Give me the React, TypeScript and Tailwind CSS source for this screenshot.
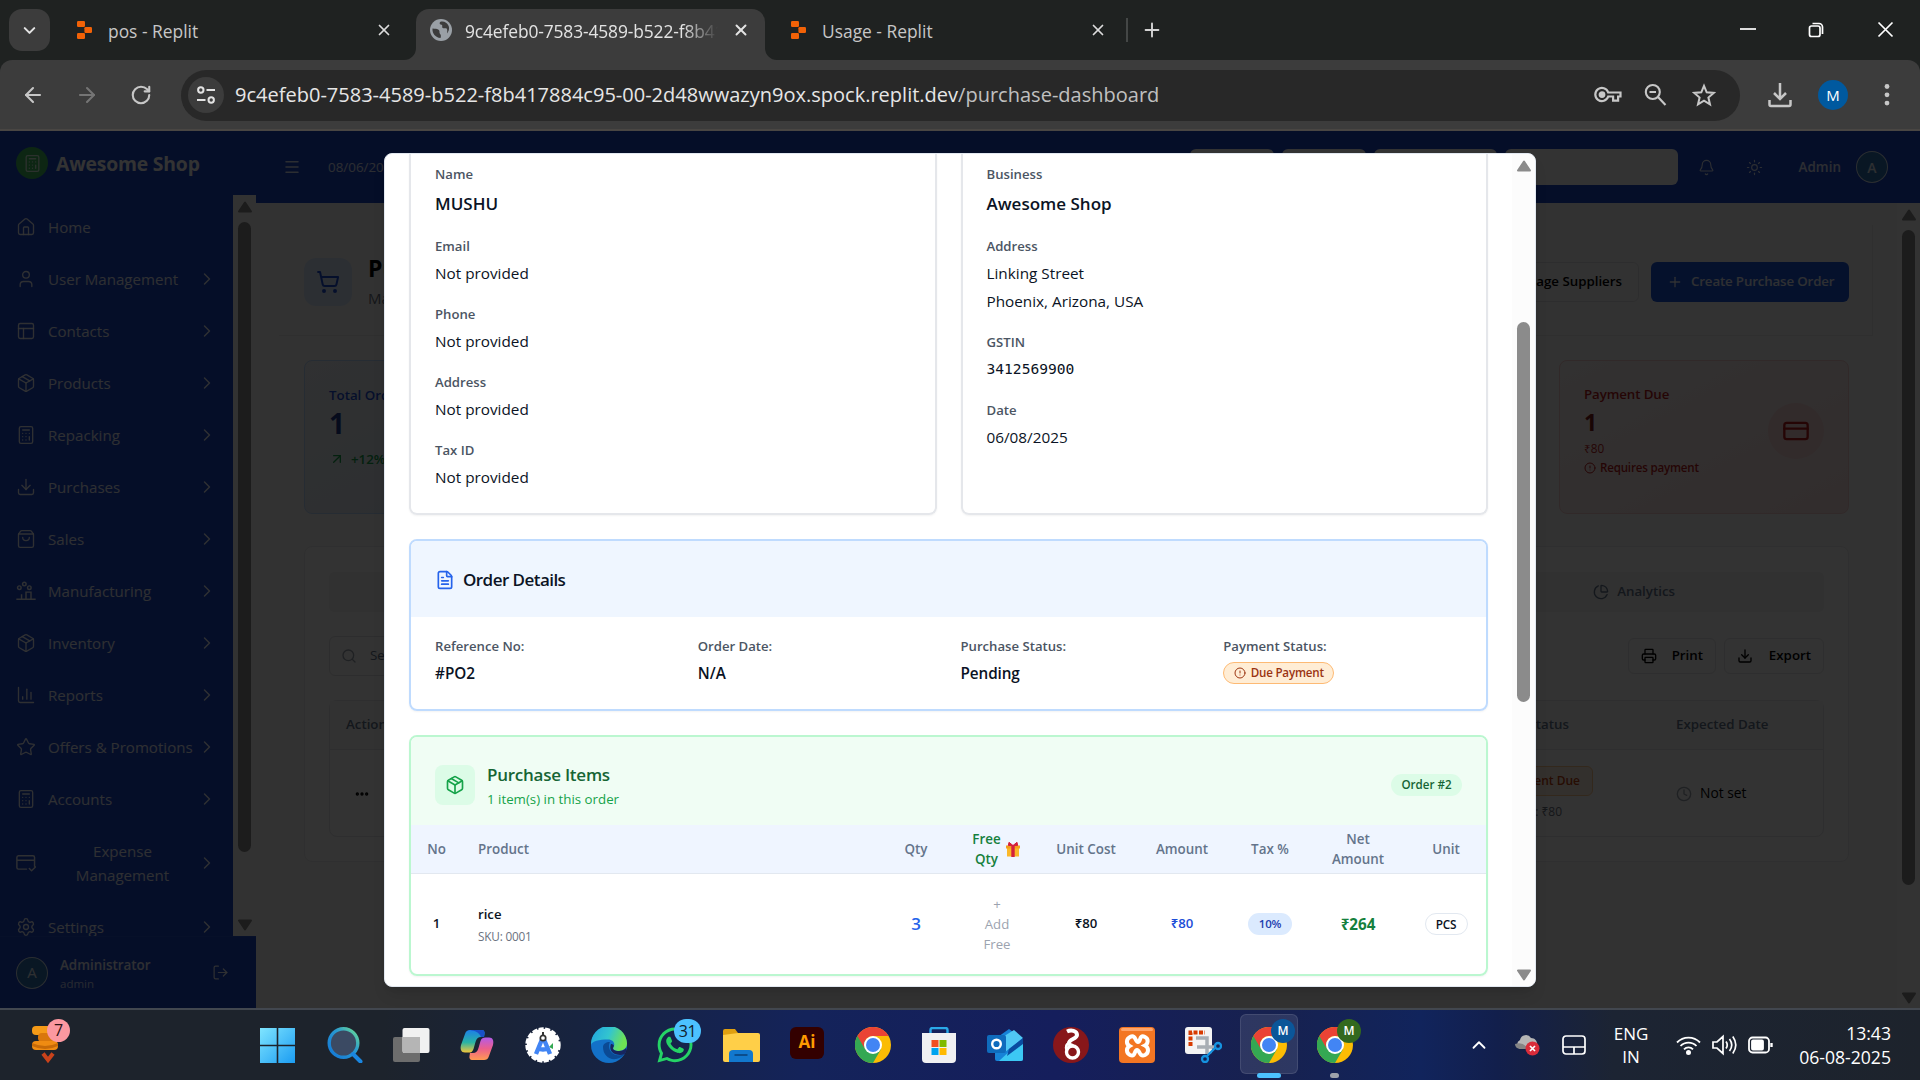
import React from 'react';
import {
  ArrowLeft, ArrowRight, ArrowUpRight, Bell, Calculator, ChevronRight, ChevronUp, CircleAlert, Clock,
  CreditCard, Download, FileText, House, LogOut, Menu, Package, PanelsTopLeft, Plus, Printer, RotateCw, Search,
  Settings, ShoppingBag, ShoppingCart, Star, Sun, User, X, ChevronDown, ChartColumn, ChartPie, Ellipsis,
} from 'lucide-react';
import { FaWhatsapp } from 'react-icons/fa';

/* ---------- Browser chrome ---------- */

function ReplitMark() {
  return (
    <svg width="15" height="18" viewBox="0 0 15 18" fill="#f26207" className="shrink-0">
      <rect x="0" y="0" width="8" height="6" rx="1.2" />
      <rect x="7.4" y="6" width="7.6" height="6" rx="1.2" />
      <rect x="0" y="12" width="8" height="6" rx="1.2" />
    </svg>
  );
}

function GlobeMark() {
  return (
    <svg width="22" height="22" viewBox="0 0 22 22" className="shrink-0">
      <circle cx="11" cy="11" r="11" fill="#9aa0a6" />
      <path d="M2.5 9.5c2.5.2 5 .2 6.4 1.5 1.2 1.3 0 2.6 1.2 3.9 1 1 1 2.4.4 4.1C5.5 18.5 2 14.6 2.5 9.5z" fill="#3c3c3c" />
      <path d="M10 3c-1 1.8.2 2.4 1.5 2.7 1.6.4 0 2.3 1.3 3.3 1.5 1 2.8-.6 4 .8.9 1.2.2 3 .3 4.6 3-3.6 2.6-8.3-1.1-10.7C14.2 2.5 12 2.3 10 3z" fill="#3c3c3c" />
    </svg>
  );
}

function TabStrip() {
  return (
    <div className="h-[60px] shrink-0 bg-[#1f2221] flex items-start text-[#e3e3e3]">
      <div className="mt-[9px] ml-[9px] w-[41px] h-[42px] rounded-[13px] bg-[#3c3c3c] flex items-center justify-center">
        <ChevronDown size={19} strokeWidth={2.6} />
      </div>
      <div className="w-[366px] h-[60px] flex items-center pl-[27px] pr-[23px] text-[#c7c7c7]">
        <ReplitMark />
        <span className="ml-4 text-[17.4px] leading-6 flex-1 pt-[1px]">pos - Replit</span>
        <X size={18} strokeWidth={2.3} className="text-[#dcdcdc]" />
      </div>
      <div className="relative mt-[9px] w-[349px] h-[51px] bg-[#3c3c3c] rounded-t-[13px] flex items-center pl-[14px] pr-[15px] pb-[9px]">
        <svg className="absolute -left-3 bottom-0" width="12" height="12"><path d="M12 0V12H0A12 12 0 0 0 12 0z" fill="#3c3c3c" /></svg>
        <svg className="absolute -right-3 bottom-0" width="12" height="12"><path d="M0 0V12H12A12 12 0 0 1 0 0z" fill="#3c3c3c" /></svg>
        <GlobeMark />
        <span className="ml-[13px] w-[253px] overflow-hidden whitespace-nowrap text-[17.4px] tracking-[-0.12px] leading-6 pt-[2px] [mask-image:linear-gradient(to_right,black_86%,transparent)]">
          9c4efeb0-7583-4589-b522-f8b417884c95
        </span>
        <X size={18} strokeWidth={2.6} className="ml-auto" />
      </div>
      <div className="w-[361px] h-[60px] flex items-center pl-[26px] pr-[19px] text-[#c7c7c7]">
        <ReplitMark />
        <span className="ml-4 text-[17.4px] leading-6 flex-1 pt-[1px]">Usage - Replit</span>
        <X size={18} strokeWidth={2.3} className="text-[#dcdcdc]" />
      </div>
      <div className="mt-[18px] w-[2px] h-6 bg-[#444746]" />
      <Plus size={22} strokeWidth={2.1} className="mt-[19px] ml-[13px] text-[#d4d4d4]" />
      <svg className="ml-auto mr-[26px] mt-[20px]" width="155" height="20" viewBox="0 0 155 20" fill="none" stroke="#ffffff" strokeWidth="1.7">
        <path d="M1 9H17" />
        <rect x="70.5" y="6" width="10.5" height="10.5" rx="2" />
        <path d="M73.5 3.5H80a3.5 3.5 0 0 1 3.5 3.5v7" />
        <path d="M139.5 2.5l14 14M153.5 2.5l-14 14" />
      </svg>
    </div>
  );
}

function Toolbar() {
  return (
    <div className="bg-[#1f2221] shrink-0">
      <div className="h-[71px] rounded-t-[12px] bg-[#3c3c3c] border-b-2 border-[#494643] flex items-center text-[#c7c7c7] pt-px">
        <ArrowLeft size={24} strokeWidth={2.1} className="ml-[21px]" />
        <ArrowRight size={24} strokeWidth={2.1} className="ml-[30px] text-[#757575]" />
        <RotateCw size={22} strokeWidth={2.3} className="ml-[31px]" />
        <div className="ml-[29px] w-[1559px] h-[51px] rounded-full bg-[#282828] flex items-center pl-[7px] pr-[24px]">
          <div className="w-9 h-9 rounded-full bg-[#3c3c3c] flex items-center justify-center">
            <svg width="20" height="20" viewBox="0 0 20 20" fill="none" stroke="#e3e3e3" strokeWidth="2">
              <circle cx="4.8" cy="5" r="2.7" /><path d="M10.5 5H19M1 15h8.5" /><circle cx="15.2" cy="15" r="2.7" />
            </svg>
          </div>
          <span className="ml-[11px] text-[20.02px] leading-7 text-[#e6e6e6] whitespace-nowrap">
            9c4efeb0-7583-4589-b522-f8b417884c95-00-2d48wwazyn9ox.spock.replit.dev<span className="text-[#c0c0c0]">/purchase-dashboard</span>
          </span>
          <svg className="ml-auto" width="28" height="20" viewBox="0 0 28 20" fill="none" stroke="#c7c7c7" strokeWidth="2.2">
            <path d="M14.2 7.5H26.5v4h-2.4v4.2h-5v-4.2h-4.9A6.6 6.6 0 1 1 14.2 7.5z" /><circle cx="8" cy="9.6" r="2.3" fill="#c7c7c7" />
          </svg>
          <svg className="ml-[22px]" width="23" height="24" viewBox="0 0 23 24" fill="none" stroke="#c7c7c7" strokeWidth="2.1">
            <circle cx="8.8" cy="9" r="7" /><path d="M14 14l7.5 8M5.5 9h6.5" />
          </svg>
          <svg className="ml-[25px]" width="24" height="24" viewBox="0 0 24 24" fill="none" stroke="#c7c7c7" strokeWidth="2">
            <path d="M12 2.8l2.7 6.5 7 .6-5.3 4.6 1.6 6.9-6-3.7-6 3.7 1.6-6.9L2.3 9.9l7-.6z" />
          </svg>
        </div>
        <svg className="ml-7" width="24" height="26" viewBox="0 0 24 26" fill="none" stroke="#c7c7c7" strokeWidth="2.5">
          <path d="M12 1v16M6 11l6 6 6-6M1.5 18v4.5a1.5 1.5 0 0 0 1.5 1.5h18a1.5 1.5 0 0 0 1.5-1.5V18" />
        </svg>
        <div className="ml-[26px] w-[30px] h-[30px] rounded-full bg-[#00599f] text-white text-[15px] font-medium flex items-center justify-center">M</div>
        <svg className="ml-[36px]" width="6" height="24" viewBox="0 0 6 24" fill="#c7c7c7">
          <circle cx="3" cy="3.5" r="2.4" /><circle cx="3" cy="11.8" r="2.4" /><circle cx="3" cy="20.1" r="2.4" />
        </svg>
      </div>
    </div>
  );
}

/* ---------- Shared scroll bar ---------- */

function Arrow({ down = false }: { down?: boolean }) {
  return (
    <svg width="14" height="12" viewBox="0 0 14 12" fill="#8b8b8b" stroke="#8b8b8b" strokeWidth="2" strokeLinejoin="round" className="shrink-0">
      <path d={down ? 'M1 1.5H13L7 10.5z' : 'M1 10.5H13L7 1.5z'} />
    </svg>
  );
}

/* ---------- Application behind the dialog ---------- */

type IconType = React.ComponentType<{ size?: number; strokeWidth?: number; className?: string }>;

const FactoryIcon: IconType = ({ size = 18 }) => (
  <svg width={size} height={size} viewBox="0 0 18 18" fill="none" stroke="currentColor" strokeWidth="1.3">
    <path d="M.3 16.5h17.4M5 16v-4M9 16V9.5M9 10h4.5v6" /><circle cx="3" cy="6" r="1.6" /><circle cx="7.5" cy="2.8" r="1.6" /><circle cx="12" cy="6" r="1.6" />
  </svg>
);
const CardCheckIcon: IconType = ({ size = 18 }) => (
  <svg width={size} height={size} viewBox="0 0 18 18" fill="none" stroke="currentColor" strokeWidth="1.3" strokeLinecap="round" strokeLinejoin="round">
    <path d="M9.5 14.5H2.2A1.5 1.5 0 0 1 .8 13V4a1.5 1.5 0 0 1 1.4-1.5h13A1.5 1.5 0 0 1 16.7 4v8M.8 6.5h16M12 14l2 2 3.5-3.5" />
  </svg>
);

const nav: { label: string; icon: IconType; leaf?: boolean }[] = [
  { label: 'Home', icon: House, leaf: true },
  { label: 'User Management', icon: User },
  { label: 'Contacts', icon: PanelsTopLeft },
  { label: 'Products', icon: Package },
  { label: 'Repacking', icon: Calculator },
  { label: 'Purchases', icon: Download },
  { label: 'Sales', icon: ShoppingBag },
  { label: 'Manufacturing', icon: FactoryIcon },
  { label: 'Inventory', icon: Package },
  { label: 'Reports', icon: ChartColumn },
  { label: 'Offers & Promotions', icon: Star },
  { label: 'Accounts', icon: Calculator },
];

function Sidebar() {
  return (
    <div className="w-64 shrink-0 bg-[#1a46c8] text-white/90 flex flex-col">
      <div className="h-16 shrink-0 flex items-center pl-4">
        <div className="w-8 h-8 rounded-full bg-[#41bd62] flex items-center justify-center text-white/80"><Calculator size={19} strokeWidth={1.7} /></div>
        <span className="ml-2 pt-[2px] text-[19.3px] tracking-[-0.15px] leading-7 font-bold whitespace-nowrap text-white">Awesome Shop</span>
      </div>
      <div className="flex h-[741px] overflow-hidden">
        <div className="w-[233px] shrink-0 pt-[6px] text-[15.1px]">
          {nav.map(({ label, icon: Icon, leaf }) => (
            <div key={label} className="h-[52px] flex items-center pl-4 pr-4">
              <Icon size={20} strokeWidth={1.6} className="shrink-0" />
              <span className="ml-3 whitespace-nowrap leading-6">{label}</span>
              {!leaf && <ChevronRight size={20} strokeWidth={1.7} className="ml-auto shrink-0" />}
            </div>
          ))}
          <div className="h-[76px] flex items-center px-4">
            <CardCheckIcon size={20} />
            <span className="flex-1 text-center leading-6 pl-3">Expense<br />Management</span>
            <ChevronRight size={20} strokeWidth={1.7} />
          </div>
          <div className="h-[52px] flex items-center px-4">
            <Settings size={20} strokeWidth={1.6} />
            <span className="ml-3 leading-6">Settings</span>
            <ChevronRight size={20} strokeWidth={1.7} className="ml-auto" />
          </div>
        </div>
        <div className="w-[23px] bg-[#fafafa] flex flex-col items-center pt-[6px] pb-[5px]">
          <Arrow />
          <div className="mt-[9px] mb-auto w-[13px] h-[630px] rounded-full bg-[#8b8b8b]" />
          <Arrow down />
        </div>
      </div>
      <div className="flex-1 border-t border-[#2450cd] flex items-center pl-4 pr-[27px]">
        <div className="w-8 h-8 rounded-full border border-white/80 bg-[#2d72b5] flex items-center justify-center text-[15px]">A</div>
        <div className="ml-3 mr-auto pt-px">
          <div className="text-[13.4px] leading-5 font-semibold">Administrator</div>
          <div className="text-[11.5px] leading-[17px] text-white/75">admin</div>
        </div>
        <LogOut size={17} strokeWidth={1.7} />
      </div>
    </div>
  );
}

function TopBar() {
  return (
    <div className="h-[72px] shrink-0 bg-[#1a46c8] flex items-center pl-[27px] pr-8 text-white/85">
      <Menu size={18} strokeWidth={2} />
      <span className="ml-[27px] mr-auto text-[13.4px]">08/06/2025</span>
      <div className="flex gap-2">
        <div className="w-[84px] h-9 rounded-md bg-white" />
        <div className="w-[84px] h-9 rounded-md bg-white" />
        <div className="w-[123px] h-9 rounded-md bg-white" />
        <div className="w-[173px] h-9 rounded-md bg-white" />
      </div>
      <Bell size={17} strokeWidth={1.6} className="ml-[20px]" />
      <Sun size={17} strokeWidth={1.6} className="ml-[31px]" />
      <span className="ml-[36px] text-[13.4px] tracking-[0.05px] font-semibold">Admin</span>
      <div className="ml-[15px] w-8 h-8 rounded-full border border-white/80 bg-[#2d72b5] flex items-center justify-center text-[14px] font-semibold">A</div>
    </div>
  );
}

function Dashboard() {
  return (
    <div className="flex-1 min-h-0 bg-[#fafafa] flex text-[13.3px]">
      <div className="flex-1 pl-[23px] pr-6 pt-[22px]">
        <div className="h-[111px] border-b border-r border-[#e8e8ea] flex items-center pl-[25px] pr-[23px] pt-[3px]">
          <div className="w-12 h-12 rounded-xl bg-[#dbeafe] flex items-center justify-center text-[#1d4ed8]"><ShoppingCart size={24} /></div>
          <div className="ml-4 mr-auto pt-px">
            <div className="text-[23px] leading-8 font-bold text-black">Purchase Dashboard</div>
            <div className="text-[15px] leading-7 text-[#6b7280]">Manage your purchases</div>
          </div>
          <div className="h-10 border border-[#e2e2e5] rounded-md flex items-center pl-12 pr-4 font-semibold text-black">Manage Suppliers</div>
          <div className="ml-3 w-[198px] h-10 rounded-md bg-[#1a56db] text-white/90 font-semibold flex items-center pl-4 whitespace-nowrap tracking-[-0.15px]">
            <Plus size={16} className="mr-2" />Create Purchase Order
          </div>
        </div>
        <div className="mt-6 ml-[25px] mr-6 h-[154px] flex justify-between">
          <div className="w-[290px] rounded-lg border border-[#bfdbfe] bg-gradient-to-br from-[#eef2f7] to-[#dbe6f2] pl-6 pt-[24px]">
            <div className="font-semibold text-[#1d4ed8] leading-5">Total Orders</div>
            <div className="text-[28px] leading-9 font-bold text-[#1e3a8a]">1</div>
            <div className="mt-[8px] flex items-center text-[#16a34a] leading-5 font-semibold"><ArrowUpRight size={16} className="mr-[6px]" />+12%</div>
          </div>
          <div className="w-[290px] rounded-lg border border-[#f5cccc] bg-gradient-to-br from-[#fbf3f3] to-[#fae0e0] pl-6 pr-6 pb-[12px] flex items-center justify-between text-[#b91c1c]">
            <div className="pb-px">
              <div className="font-semibold leading-5 tracking-[-0.1px]">Payment Due</div>
              <div className="text-[23px] leading-8 font-bold text-[#7f1d1d] mt-[2px]">1</div>
              <div className="text-[11.8px] leading-5">₹80</div>
              <div className="text-[11.6px] tracking-[-0.2px] leading-5 flex items-center font-semibold"><CircleAlert size={12} className="mr-1" />Requires payment</div>
            </div>
            <div className="w-14 h-14 rounded-full bg-[#fbd5d5] flex items-center justify-center"><CreditCard size={28} strokeWidth={2} /></div>
          </div>
        </div>
        <div className="mt-8 ml-[25px] mr-6 h-[316px] rounded-lg border border-[#ebebee] bg-[#fcfcfc] px-6 pt-[25px]">
          <div className="h-10 rounded-md bg-[#f2f3f4] flex items-center justify-end pr-[149px] text-[#64748b] font-semibold">
            <ChartPie size={16} className="mr-2" />Analytics
          </div>
          <div className="mt-6 flex items-center h-10">
            <div className="w-96 h-10 border border-[#e2e2e5] rounded-md flex items-center pl-[11px] text-[#64748b]"><Search size={16} className="mr-[13px] text-[#9ca3af]" />Search orders</div>
            <div className="ml-auto h-9 w-[88px] border border-[#e6e6e9] rounded-md flex items-center justify-between px-3 font-semibold text-black"><Printer size={16} />Print</div>
            <div className="ml-2 h-9 w-[100px] border border-[#e6e6e9] rounded-md flex items-center justify-between px-3 font-semibold text-black"><Download size={16} />Export</div>
          </div>
          <div className="mt-6 h-[137px] border border-[#e6e6e9] rounded-lg">
            <div className="h-[49px] border-b border-[#e6e6e9] bg-[#f8f9fa] flex items-center px-4 font-semibold text-[#64748b]">
              <span className="mr-auto">Actions</span>
              <span className="mr-[107px]">Payment Status</span>
              <span className="w-[131px] whitespace-nowrap">Expected Date</span>
            </div>
            <div className="h-[87px] flex items-center pl-[24px] pr-4 text-black">
              <Ellipsis size={16} strokeWidth={3} className="mr-auto" />
              <div className="w-[160px] text-right mr-[83px]">
                <div className="h-[30px] rounded-md border border-[#fdc88e] bg-[#fff1e2] text-[#c2410c] flex items-center justify-end px-3 text-[12px] font-semibold">Payment Due</div>
                <div className="mt-[6px] mr-[31px] text-[12px] leading-5 text-[#6b7280]">Due: ₹80</div>
              </div>
              <div className="w-[131px] flex items-center text-[13.8px]"><Clock size={16} className="mr-2 text-[#9ca3af]" />Not set</div>
            </div>
          </div>
        </div>
      </div>
      <div className="w-[23px] bg-[#fcfcfc] flex flex-col items-center pt-[6px] pb-1">
        <Arrow />
        <div className="mt-[9px] mb-auto w-[13px] h-[655px] rounded-full bg-[#8b8b8b]" />
        <Arrow down />
      </div>
    </div>
  );
}

/* ---------- Dialog ---------- */

function Field({ label, children, big = false }: { label: string; children: React.ReactNode; big?: boolean }) {
  return (
    <div>
      <div className="text-[13.15px] leading-5 font-semibold text-[#4b5563]">{label}</div>
      {big
        ? <div className="mt-[6px] text-[17px] leading-7 font-semibold text-[#0b1324]">{children}</div>
        : <div className="mt-[5px] mb-px text-[15.3px] leading-6 text-[#0b1324]">{children}</div>}
    </div>
  );
}

const cell = 'flex items-center justify-center text-center';

function PurchaseTable() {
  return (
    <div className="text-[14px]">
      <div className="h-[49px] grid grid-cols-[51px_414px_80px_82px_96px_96px_80px_96px_80px] bg-[#eff5ff] border-b border-[#e2e8f0] text-[13.4px] leading-5 font-semibold text-[#64748b]">
        <div className={cell}>No</div>
        <div className="flex items-center pl-4">Product</div>
        <div className={cell}>Qty</div>
        <div className={cell + ' text-[#15803d] gap-[5px] pr-[2px]'}>
          <span>Free<br />Qty</span>
          <svg width="14" height="15" viewBox="0 0 14 15">
            <rect x="1" y="4.5" width="12" height="10" fill="#fbb829" /><rect x="0" y="3.5" width="14" height="3" fill="#f59f1c" />
            <rect x="5.3" y="3.5" width="3.4" height="11.5" fill="#d4213d" /><path d="M7 3.5L3 .3 2.3 3.5zM7 3.5l4-3.2.7 3.2z" fill="#d4213d" stroke="#d4213d" />
          </svg>
        </div>
        <div className={cell}>Unit Cost</div>
        <div className={cell}>Amount</div>
        <div className={cell}>Tax %</div>
        <div className={cell}>Net<br />Amount</div>
        <div className={cell}>Unit</div>
      </div>
      <div className="h-[100px] grid grid-cols-[51px_414px_80px_82px_96px_96px_80px_96px_80px] text-[#0b1324]">
        <div className={cell + ' font-semibold text-[13.2px]'}>1</div>
        <div className="flex flex-col justify-center pl-4 pt-px">
          <div className="font-semibold text-[13.2px] leading-5">rice</div>
          <div className="mt-[2px] text-[11.8px] leading-5 tracking-[-0.2px] text-[#6b7280]">SKU: 0001</div>
        </div>
        <div className={cell + ' text-[17px] font-semibold text-[#2563eb]'}>3</div>
        <div className={cell + ' text-[13.2px] leading-5 text-[#9ca3af]'}>+<br />Add<br />Free</div>
        <div className={cell + ' font-semibold text-[13.2px]'}>₹80</div>
        <div className={cell + ' font-semibold text-[13.2px] text-[#1d4ed8]'}>₹80</div>
        <div className={cell}><span className="w-11 h-[22px] rounded-full bg-[#dbeafe] text-[#1e40af] text-[11.5px] leading-[22px] font-semibold tracking-[-0.2px]">10%</span></div>
        <div className={cell + ' font-bold text-[15.2px] text-[#15803d]'}>₹264</div>
        <div className={cell}><span className="w-[43px] h-[22px] rounded-full border border-[#e2e8f0] text-[11.8px] leading-[21px] font-semibold tracking-[-0.2px]">PCS</span></div>
      </div>
    </div>
  );
}

function Dialog() {
  return (
    <div className="absolute left-[384px] top-[22px] w-[1152px] h-[834px] rounded-lg bg-white border border-[#e2e8f0] overflow-hidden flex shadow-lg">
      <div className="flex-1 pl-6 pr-6 overflow-hidden">
        <div className="grid grid-cols-2 gap-6 h-[361px]">
          <div className="border-2 border-t-0 border-[#e5e7eb] rounded-b-lg pl-6 pt-[10px] flex flex-col gap-[18px] shadow-xs">
            <Field label="Name" big>MUSHU</Field>
            <Field label="Email">Not provided</Field>
            <Field label="Phone">Not provided</Field>
            <Field label="Address">Not provided</Field>
            <Field label="Tax ID">Not provided</Field>
          </div>
          <div className="border-2 border-t-0 border-[#e5e7eb] rounded-b-lg pl-6 pt-[10px] flex flex-col gap-[18px] shadow-xs">
            <Field label="Business" big>Awesome Shop</Field>
            <Field label="Address"><div>Linking Street</div><div className="mt-1">Phoenix, Arizona, USA</div></Field>
            <Field label="GSTIN"><span className="font-['DejaVu_Sans_Mono',monospace] text-[14.6px] leading-6 block">3412569900</span></Field>
            <Field label="Date">06/08/2025</Field>
          </div>
        </div>
        <div className="mt-6 h-[172px] border-2 border-[#bfdbfe] rounded-lg overflow-hidden shadow-xs">
          <div className="h-[76px] bg-[#eff6ff] flex items-center pl-6 pt-[2px]">
            <FileText size={20} className="text-[#2563eb]" />
            <span className="ml-2 text-[17px] tracking-[-0.55px] leading-7 font-semibold text-[#0b1324]">Order Details</span>
          </div>
          <div className="grid grid-cols-4 gap-6 px-6 pt-[19px]">
            <Field label="Reference No:"><span className="font-semibold">#PO2</span></Field>
            <Field label="Order Date:"><span className="font-semibold">N/A</span></Field>
            <Field label="Purchase Status:"><span className="font-semibold tracking-[-0.1px]">Pending</span></Field>
            <Field label="Payment Status:">
              <span className="mt-[6px] w-[111px] h-[22px] rounded-full border border-[#fdba74] bg-[#ffedd5] text-[#9a3412] text-[11.6px] tracking-[-0.2px] font-semibold flex items-center justify-center whitespace-nowrap">
                <CircleAlert size={12} className="mr-[5px]" />Due Payment
              </span>
            </Field>
          </div>
        </div>
        <div className="mt-6 h-[241px] border-2 border-[#bbf7d0] rounded-lg overflow-hidden shadow-xs">
          <div className="h-[88px] bg-[#f0fdf4] flex items-center px-6 pt-2">
            <div className="w-10 h-10 rounded-lg bg-[#dcfce7] flex items-center justify-center text-[#16a34a]"><Package size={20} /></div>
            <div className="ml-3 mr-auto">
              <div className="text-[17px] tracking-[-0.25px] leading-7 font-semibold text-[#166534]">Purchase Items</div>
              <div className="text-[13.3px] leading-5 text-[#16a34a]">1 item(s) in this order</div>
            </div>
            <span className="h-[22px] w-[71px] text-center rounded-full bg-[#dcfce7] text-[#166534] text-[11.6px] leading-[22px] font-semibold">Order #2</span>
          </div>
          <PurchaseTable />
        </div>
      </div>
      <div className="w-[23px] bg-[#fcfcfc] flex flex-col items-center pt-[6px] pb-[5px]">
        <Arrow />
        <div className="mt-[150px] mb-auto w-[13px] h-[380px] rounded-full bg-[#8b8b8b]" />
        <Arrow down />
      </div>
    </div>
  );
}

/* ---------- Taskbar ---------- */

function ChromeLogo() {
  return (
    <svg width="36" height="36" viewBox="0 0 36 36">
      <circle cx="18" cy="18" r="18" fill="#fbbc04" />
      <path d="M2.4 9A18 18 0 0 0 18 36l7.8-13.5L18 18z" fill="#34a853" />
      <path d="M2.4 9A18 18 0 0 1 33.6 9H18a9 9 0 0 0-7.8 13.5z" fill="#ea4335" />
      <circle cx="18" cy="18" r="9" fill="#fff" /><circle cx="18" cy="18" r="7" fill="#4285f4" />
    </svg>
  );
}

const slot = 'relative w-[66px] h-full shrink-0 flex items-center justify-center';

function Taskbar() {
  return (
    <div className="h-[72px] shrink-0 border-t-2 border-[#42474f] bg-[linear-gradient(to_right,#1d232c_0%,#1d232c_20%,#17233f_30%,#14235a_42%,#151e5c_55%,#17214f_66%,#11245c_74%,#121f4c_78%,#1c2433_84%,#1d232c_100%)] flex items-center text-white">
      <div className="relative w-[244px] h-full shrink-0">
        <svg className="absolute left-[31px] top-[15px]" width="32" height="40" viewBox="0 0 32 40">
          <rect x="1" y="1" width="22" height="9" rx="4" fill="#f59a17" /><rect x="7" y="8" width="21" height="9" rx="4" fill="#d9770c" />
          <rect x="1" y="16" width="26" height="9" rx="4" fill="#ef8b12" /><path d="M1 18q13 6 26 0v3q-13 6-26 0z" fill="#c76a08" />
          <path d="M12 28.5l5 6.5 5-6.500" fill="none" stroke="#c9421b" strokeWidth="4" />
        </svg>
        <div className="absolute left-[47px] top-[9px] w-[23px] h-[23px] rounded-full bg-[#fb98a0] text-[#2b1215] text-[16px] leading-[23px] text-center">7</div>
      </div>
      <div className={slot}>
        <svg width="35" height="35" viewBox="0 0 35 35"><defs><linearGradient id="win" x1="0" y1="0" x2="1" y2="1"><stop offset="0" stopColor="#7fe5ff" /><stop offset="1" stopColor="#1b9cf2" /></linearGradient></defs>
          <path d="M0 0h16.7v16.7H0zM18.3 0H35v16.7H18.3zM0 18.3h16.7V35H0zM18.3 18.3H35V35H18.3z" fill="url(#win)" /></svg>
      </div>
      <div className={slot + ' ml-[2px]'}>
        <svg width="36" height="36" viewBox="0 0 36 36"><defs><linearGradient id="srch" x1="0" y1="1" x2="1" y2="0"><stop offset="0" stopColor="#1276d6" /><stop offset=".6" stopColor="#2a9ad0" /><stop offset="1" stopColor="#6ee08f" /></linearGradient></defs>
          <circle cx="16.5" cy="16" r="14.3" fill="#3b4a63" stroke="url(#srch)" strokeWidth="3.4" /><path d="M26 27l7.5 7.5" stroke="#1a86e0" strokeWidth="4" strokeLinecap="round" /></svg>
      </div>
      <div className={slot}>
        <svg width="37" height="35" viewBox="0 0 37 35"><rect x="0" y="9" width="27" height="25" rx="2" fill="#6d6d6d" /><rect x="9.5" y="0" width="27" height="25" rx="2" fill="#f1f1f1" /><path d="M9.5 9H27v16H11.5a2 2 0 0 1-2-2z" fill="#b5b5b5" /></svg>
      </div>
      <div className={slot}>
        <svg width="34" height="32" viewBox="0 0 34 32"><defs>
          <linearGradient id="cpa" x1="0" y1="0" x2="0" y2="1"><stop offset="0" stopColor="#1d7fe8" /><stop offset=".55" stopColor="#29b3a5" /><stop offset="1" stopColor="#f2c63a" /></linearGradient>
          <linearGradient id="cpb" x1="0" y1="0" x2="0" y2="1"><stop offset="0" stopColor="#b45be8" /><stop offset=".5" stopColor="#ec5f8c" /><stop offset="1" stopColor="#ff9a52" /></linearGradient></defs>
          <path d="M10 1h12c2 0 3 2 2.5 4L24 8h-3c-3 0-4.5 1.5-5.5 5l-2 7c-1 3-2.5 3.500-5 3.500H5C1 23.500 0 20 1 16L5 5c1-3 2.500-4 5-4z" fill="url(#cpa)" />
          <path d="M24 31H12c-2 0-3-2-2.500-4l.5-3h3c3 0 4.500-1.500 5.500-5l2-7c1-3 2.500-3.500 5-3.500H29c4 0 5 3.500 4 7.500l-4 11c-1 3-2.500 4-5 4z" fill="url(#cpb)" />
          <path d="M10 1h12c2 0 3 2 2.500 4L24 8h-3c-2-5-6-6-11-7z" fill="#1a50c8" /></svg>
      </div>
      <div className={slot}>
        <svg width="36" height="36" viewBox="0 0 36 36"><circle cx="18" cy="18" r="16.2" fill="#fff" stroke="#fff" strokeWidth="3" strokeDasharray="5 1.5" />
          <path d="M24 20l4-4v6z" fill="#34a853" /><path d="M18 10L11 27M18 10l7 17M12 21q6 3 12 0" fill="none" stroke="#4285f4" strokeWidth="4.4" /><circle cx="18" cy="11" r="2.7" fill="#fff" stroke="#333" strokeWidth="1.7" /><path d="M18 5v3" stroke="#333" strokeWidth="2" /></svg>
      </div>
      <div className={slot}>
        <svg width="36" height="36" viewBox="0 0 36 36"><defs><linearGradient id="ed" x1="0" y1="0" x2="1" y2=".3"><stop offset="0" stopColor="#1fa2e0" /><stop offset=".55" stopColor="#33c5cf" /><stop offset="1" stopColor="#6ee254" /></linearGradient></defs>
          <circle cx="18" cy="18" r="18" fill="#1371c8" />
          <path d="M0 18A18 18 0 0 1 36 16c.3 5-3.5 8-8 8-5 0-7-2-5.500-4 2-3 0-7.500-5.500-7.500C8 12.500 1 14 0 18z" fill="url(#ed)" />
          <path d="M12 20c0 8 6 13 13 12 4-.5 7-3 8.500-5C28 30 19 28 18 20c-.3-3 1-5 1-5-4 0-7 2-7 5z" fill="#0b4a94" />
          <path d="M22.500 20c-1.500 2 .5 4 5.500 4 2.800 0 5.500-1 7-3l.5 2c-.3 1.500-1 3-2 4.300-6 1.700-13-.3-14-5.300-.5-2.500.5-5 .5-5s4 0 2.500 3z" fill="#17215a" opacity=".95" /></svg>
      </div>
      <div className={slot}>
        <FaWhatsapp size={40} color="#25d366" />
        <div className="absolute left-[32px] top-[9px] w-[27px] h-[24px] rounded-full bg-[#4cc2ff] text-[#10202c] text-[16px] leading-6 text-center tracking-[-0.5px]">31</div>
      </div>
      <div className={slot}>
        <svg width="37" height="33" viewBox="0 0 37 33"><path d="M0 2a2 2 0 0 1 2-2h10l3 4v10H0z" fill="#e0a010" /><path d="M0 6l15-2h20a2 2 0 0 1 2 2v25a2 2 0 0 1-2 2H2a2 2 0 0 1-2-2z" fill="#ffcf48" /><path d="M6 33V25a4 4 0 0 1 4-4h16a4 4 0 0 1 4 4v8z" fill="#1278ce" /><path d="M11.5 26h13" stroke="#0b4d8c" strokeWidth="2" /></svg>
      </div>
      <div className={slot}>
        <div className="w-[34px] h-[32px] -mt-1 rounded-[6px] bg-[#330000] text-[#ff9a00] font-bold text-[17px] leading-[30px] text-center">Ai</div>
      </div>
      <div className={slot}><ChromeLogo /></div>
      <div className={slot}>
        <svg width="36" height="36" viewBox="0 0 36 36"><path d="M9.5 8V3a2 2 0 0 1 2-2h13a2 2 0 0 1 2 2v5" fill="none" stroke="#2aa9e8" strokeWidth="2.4" /><path d="M1 6h34v26a4 4 0 0 1-4 4H5a4 4 0 0 1-4-4z" fill="#f0f0f2" /><rect x="10.5" y="13" width="7" height="7" fill="#f25022" /><rect x="18.5" y="13" width="7" height="7" fill="#7fba00" /><rect x="10.5" y="21" width="7" height="7" fill="#00a4ef" /><rect x="18.5" y="21" width="7" height="7" fill="#ffb900" /></svg>
      </div>
      <div className={slot}>
        <svg width="37" height="32" viewBox="0 0 37 32"><path d="M8 10L22 0l14 10v20a2 2 0 0 1-2 2H10a2 2 0 0 1-2-2z" fill="#1783d8" /><path d="M14 9L27 1l9 8-18 14z" fill="#50c8f5" /><path d="M36 10v20a2 2 0 0 1-2 2H12z" fill="#3cc8f4" /><path d="M22 20L36 9v6L20 27z" fill="#0a4ba0" /><rect x="0" y="6" width="19" height="18" rx="2" fill="#0f6cbd" /><circle cx="9.5" cy="15" r="4.3" fill="none" stroke="#fff" strokeWidth="2.4" /></svg>
      </div>
      <div className={slot}>
        <svg width="36" height="36" viewBox="0 0 36 36" fill="none" stroke="#fff"><circle cx="18" cy="18" r="18" fill="#88171a" stroke="none" />
          <path d="M14 4.500c4-2 10-1 10 3.500 0 4-8 4-8 8 0 2 2 2 4 3" strokeWidth="4" /><circle cx="19.500" cy="25" r="6" strokeWidth="3.400" /><path d="M18 16c-5 0-6 4-4 8" strokeWidth="2.600" /></svg>
      </div>
      <div className={slot}>
        <svg width="36" height="36" viewBox="0 0 36 36"><rect width="36" height="36" rx="4" fill="#f37623" /><rect x="2" y="1" width="32" height="3" rx="1.5" fill="#ffa56a" />
          <path d="M11 10c6-3 5 5 8 5s1-8 7-5c4 2 3 7 0 8.500 4 2 4 7.500 0 9.500-6 2.500-5-5-8-5s-1 7.500-7 5c-4-2-4-7-.5-9-3.500-2-3.500-7 .5-9z" fill="none" stroke="#fff" strokeWidth="4" /></svg>
      </div>
      <div className={slot}>
        <svg width="37" height="36" viewBox="0 0 37 36"><rect width="27" height="27" rx="3" fill="#f4f4f4" /><path d="M5.5 19V5.500H20" fill="none" stroke="#d83b01" strokeWidth="4" strokeDasharray="4 1.5" /><path d="M11 11h11v16M12 20h17" fill="none" stroke="#a8aeb4" strokeWidth="3.500" /><circle cx="20" cy="32" r="3" fill="none" stroke="#1593e0" strokeWidth="2.3" /><circle cx="33" cy="19" r="3" fill="none" stroke="#1593e0" strokeWidth="2.3" /><path d="M22 29l8-8" stroke="#1593e0" strokeWidth="2.3" /></svg>
      </div>
      <div className={slot}>
        <div className="absolute left-[4px] top-[4px] w-[58px] h-[60px] rounded-md bg-white/10 border border-white/10" />
        <div className="relative"><ChromeLogo /></div>
        <div className="absolute left-[35px] top-[9px] w-6 h-6 rounded-full bg-[#0b5699] text-[12px] font-semibold leading-6 text-center">M</div>
        <div className="absolute left-[21px] bottom-[2px] w-6 h-[5px] rounded-full bg-[#4cc2ff]" />
      </div>
      <div className={slot}>
        <ChromeLogo />
        <div className="absolute left-[35px] top-[9px] w-6 h-6 rounded-full bg-[#33691e] text-[12px] font-semibold leading-6 text-center">M</div>
        <div className="absolute left-[28px] bottom-[2px] w-[9px] h-[5px] rounded-full bg-[#9da2ab]" />
      </div>
      <ChevronUp size={22} strokeWidth={2} className="ml-[100px]" />
      <svg className="ml-[24px]" width="26" height="22" viewBox="0 0 26 22"><path d="M6 15a5 5 0 0 1 0-9 6 6 0 0 1 11-2c4 0 6 3 6 6s-2 5-5 5z" fill="#b5b5b5" /><path d="M1 10q8-3 13 5H6a5 5 0 0 1-5-5z" fill="#858585" /><circle cx="18.5" cy="14.5" r="7" fill="#d92c3a" /><path d="M16 12l5 5M21 12l-5 5" stroke="#fff" strokeWidth="1.7" /></svg>
      <svg className="ml-[22px]" width="24" height="20" viewBox="0 0 24 20" fill="none" stroke="#fff" strokeWidth="1.7"><rect x="1" y="1" width="22" height="18" rx="3" /><path d="M1 12h22M12 12v7" /></svg>
      <div className="ml-[26px] w-[38px] text-center text-[17px] leading-[23px]">ENG<br />IN</div>
      <svg className="ml-[26px]" width="25" height="20" viewBox="0 0 25 20" fill="none" stroke="#fff" strokeWidth="1.8"><path d="M1 7.5a16 16 0 0 1 23 0M4.5 11a11 11 0 0 1 16 0M8 14.3a6.3 6.3 0 0 1 9 0" /><circle cx="12.5" cy="17.5" r="1.6" fill="#fff" /></svg>
      <svg className="ml-[11px]" width="25" height="22" viewBox="0 0 25 22" fill="none" stroke="#fff" strokeWidth="1.7"><path d="M1 8h4l6-5.5v17L5 14H1zM14 7.5q2.5 3.500 0 7M17.500 5q4.500 6 0 12M20.800 2.500q6 8.500 0 17" /></svg>
      <svg className="ml-[11px]" width="25" height="18" viewBox="0 0 25 18" fill="none" stroke="#fff" strokeWidth="1.8"><rect x="1" y="1.5" width="20" height="15" rx="3.5" /><rect x="4" y="4.5" width="11" height="9" rx="1" fill="#fff" /><path d="M23.5 7v4" strokeWidth="2.4" /></svg>
      <div className="ml-auto mr-[29px] -mt-px text-right text-[17.6px] leading-[24px] whitespace-nowrap">13:43<br />06-08-2025</div>
    </div>
  );
}

export default function App() {
  return (
    <div className="w-[1920px] h-[1080px] overflow-hidden flex flex-col font-['Open_Sans','Noto_Sans',sans-serif]">
      <TabStrip />
      <Toolbar />
      <div className="relative flex-1 min-h-0 flex overflow-hidden">
        <Sidebar />
        <div className="flex-1 flex flex-col min-w-0">
          <TopBar />
          <Dashboard />
        </div>
        <div className="absolute inset-0 bg-black/80" />
        <Dialog />
      </div>
      <Taskbar />
    </div>
  );
}
